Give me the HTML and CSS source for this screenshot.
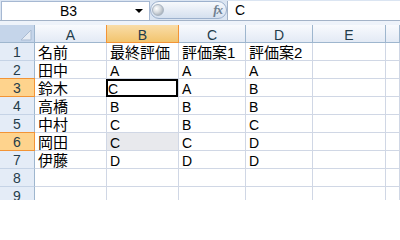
FILE: index.html
```html
<!DOCTYPE html>
<html lang="ja">
<head>
<meta charset="utf-8">
<link rel="stylesheet" href="styles.css">
</head>
<body>
<div class="app">
  <div class="fbar">
    <div class="namebox"><span class="nb-text">B3</span><span class="nb-arrow"></span></div>
    <div class="pill">
      <span class="orb"></span>
      <span class="fx">fx</span>
    </div>
    <div class="formula">C</div>
  </div>
  <div class="band"></div>
  <div class="sheet">
    <div class="corner"><svg width="34" height="17" viewBox="0 0 34 17"><polygon points="31,5 31,15 21,15" fill="#e6ecf4" stroke="#a9bbd2" stroke-width="1"/></svg></div>
    <div class="ch">A</div>
    <div class="ch sel">B</div>
    <div class="ch">C</div>
    <div class="ch">D</div>
    <div class="ch">E</div>
    <div class="ch"></div>

    <div class="rh">1</div>
    <div class="c jp">名前</div><div class="c jp">最終評価</div><div class="c jp">評価案1</div><div class="c jp">評価案2</div><div class="c"></div><div class="c"></div>

    <div class="rh">2</div>
    <div class="c jp">田中</div><div class="c">A</div><div class="c">A</div><div class="c">A</div><div class="c"></div><div class="c"></div>

    <div class="rh sel">3</div>
    <div class="c jp">鈴木</div><div class="c active">C</div><div class="c">A</div><div class="c">B</div><div class="c"></div><div class="c"></div>

    <div class="rh">4</div>
    <div class="c jp">高橋</div><div class="c">B</div><div class="c">B</div><div class="c">B</div><div class="c"></div><div class="c"></div>

    <div class="rh">5</div>
    <div class="c jp">中村</div><div class="c">C</div><div class="c">B</div><div class="c">C</div><div class="c"></div><div class="c"></div>

    <div class="rh sel">6</div>
    <div class="c jp">岡田</div><div class="c shade">C</div><div class="c">C</div><div class="c">D</div><div class="c"></div><div class="c"></div>

    <div class="rh">7</div>
    <div class="c jp">伊藤</div><div class="c">D</div><div class="c">D</div><div class="c">D</div><div class="c"></div><div class="c"></div>

    <div class="rh">8</div>
    <div class="c"></div><div class="c"></div><div class="c"></div><div class="c"></div><div class="c"></div><div class="c"></div>

    <div class="rh">9</div>
    <div class="c"></div><div class="c"></div><div class="c"></div><div class="c"></div><div class="c"></div><div class="c"></div>
  </div>
</div>
</body>
</html>
```

FILE: styles.css
```css
html, body {
  margin: 0;
  padding: 0;
  background: #ffffff;
}

.app {
  width: 400px;
  height: 200px;
  overflow: hidden;
  font-family: "Liberation Sans", "Noto Sans CJK JP", sans-serif;
  font-size: 14px;
  color: #000;
}

.fbar {
  display: flex;
  height: 20px;
  background: #dbe5f2;
  border-bottom: 1px solid #a3b3c8;
}

.namebox {
  box-sizing: border-box;
  margin: 1px 0 0 1px;
  width: 149px;
  height: 19px;
  background: #fff;
  border: 1px solid #a6b8d2;
  border-bottom: none;
  display: flex;
  align-items: flex-start;
}

.nb-text {
  width: 133px;
  text-align: center;
  line-height: 18px;
  padding-top: 0px;
}

.nb-arrow {
  margin-top: 7px;
  width: 0;
  height: 0;
  border-left: 4px solid transparent;
  border-right: 4px solid transparent;
  border-top: 4px solid #000;
}

.pill {
  box-sizing: border-box;
  margin-top: 1px;
  width: 77px;
  height: 18px;
  border: 1px solid #9db1cd;
  border-radius: 9px;
  background: linear-gradient(#f7f9fc, #d5e0ef);
  display: flex;
  align-items: center;
  justify-content: space-between;
  padding: 0 4px 0 1px;
}

.orb {
  width: 12px;
  height: 12px;
  border-radius: 50%;
  background: radial-gradient(circle at 35% 35%, #ffffff 0%, #d4d9de 45%, #8e98a3 100%);
  border: 1px solid #a9b5c3;
  box-sizing: border-box;
}

.fx {
  font-family: "Liberation Serif", serif;
  font-style: italic;
  font-weight: bold;
  font-size: 13px;
  color: #6f7f90;
  letter-spacing: -1px;
}

.formula {
  flex: 1;
  background: #fff;
  border-left: 1px solid #a3b3c8;
  padding-left: 7px;
  line-height: 19px;
  margin-top: 1px;
}

.band {
  height: 4px;
  background: #eef3fa;
}

.sheet {
  display: grid;
  grid-template-columns: 35px 72px 72px 67px 67px 73px 1fr;
  grid-auto-rows: 18px;
}

.corner {
  box-sizing: border-box;
  background: #c5d5ea;
  border-right: 1px solid #9eb6ce;
  border-bottom: 1px solid #9eb6ce;
}

.corner svg {
  display: block;
}

.ch {
  box-sizing: border-box;
  background: linear-gradient(#f8fafd, #e3eaf5);
  border-right: 1px solid #9eb6ce;
  border-bottom: 1px solid #9eb6ce;
  text-align: center;
  line-height: 18px;
  padding-top: 1px;
  color: #243c4a;
}

.ch.sel {
  background: linear-gradient(#f9dda8, #f2c46e);
  border-right-color: #f29436;
  border-bottom-color: #f29436;
  box-shadow: -1px 0 0 #f29436;
}

.rh {
  box-sizing: border-box;
  background: #e4ecf7;
  border-right: 1px solid #9eb6ce;
  border-bottom: 1px solid #c5d3e6;
  text-align: center;
  line-height: 18px;
  color: #243c4a;
}

.rh.sel {
  background: #fed38d;
  border-right-color: #f29436;
  border-bottom-color: #f29436;
  box-shadow: 0 -1px 0 #f29436;
}

.c {
  box-sizing: border-box;
  position: relative;
  background: #fff;
  border-right: 1px solid #d0d7e5;
  border-bottom: 1px solid #d0d7e5;
  line-height: 18px;
  padding: 1px 0 0 3px;
  white-space: nowrap;
}

.c.jp {
  font-size: 15px;
}

.c.shade {
  background: #e8e9ed;
}

.c.active {
  padding-left: 1px;
}

.c.active::after {
  content: "";
  position: absolute;
  left: -1px;
  top: 0;
  width: 72px;
  height: 18px;
  box-sizing: border-box;
  border: 2px solid #000;
}
```
